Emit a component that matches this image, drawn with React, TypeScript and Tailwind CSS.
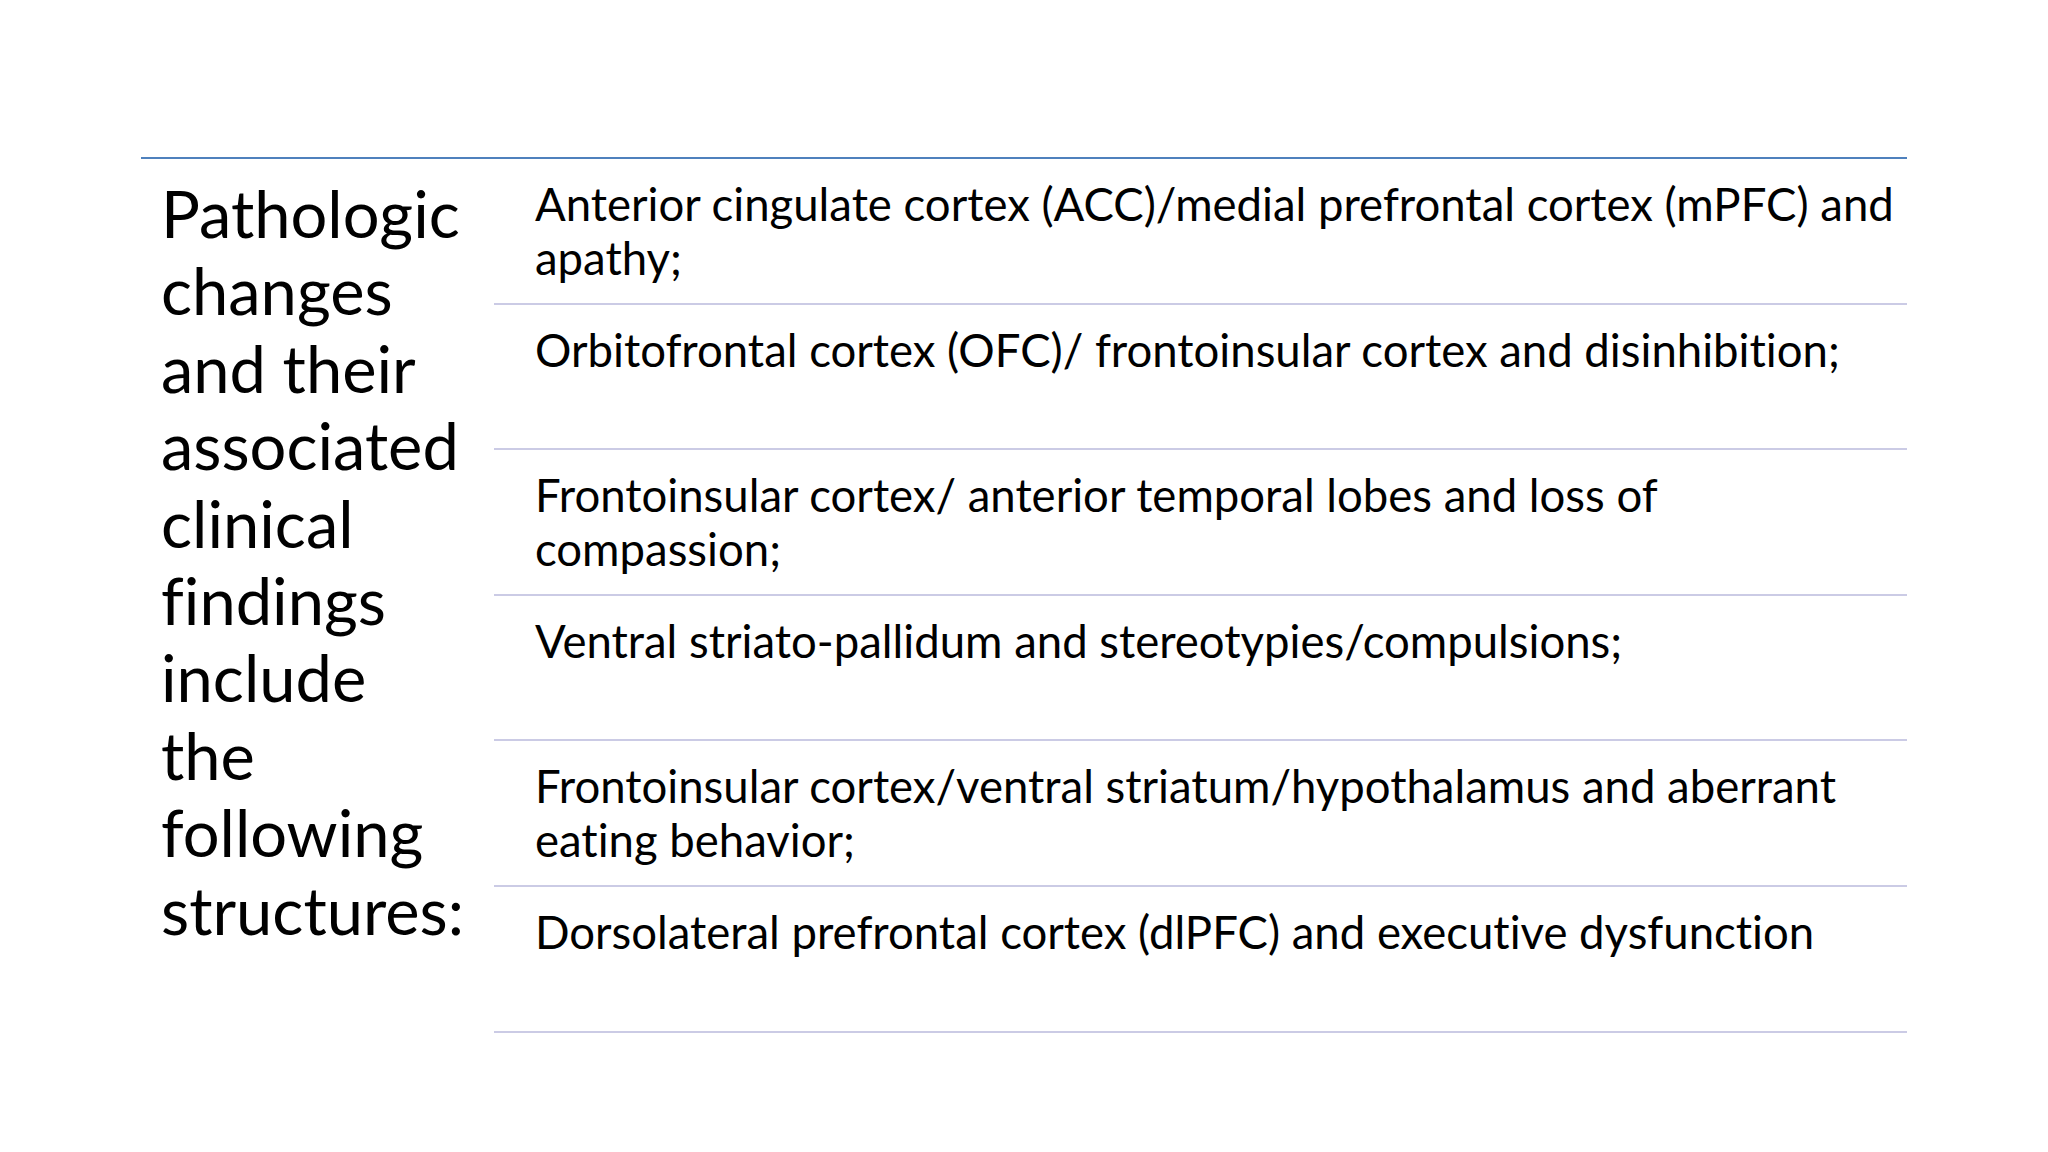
import React from "react";

const rows: string[] = [
  "Anterior cingulate cortex (ACC)/medial prefrontal cortex (mPFC) and apathy;",
  "Orbitofrontal cortex (OFC)/ frontoinsular cortex and disinhibition;",
  "Frontoinsular cortex/ anterior temporal lobes and loss of compassion;",
  "Ventral striato-pallidum and stereotypies/compulsions;",
  "Frontoinsular cortex/ventral striatum/hypothalamus and aberrant eating behavior;",
  "Dorsolateral prefrontal cortex (dlPFC) and executive dysfunction",
];

export default function App() {
  return (
    <div
      className="w-[2048px] h-[1152px] bg-white text-black overflow-hidden [font-variant-ligatures:none]"
      style={{ fontFamily: "Lato, 'Noto Sans', sans-serif" }}
    >
      <div className="pt-[157px] px-[141px]">
        <div className="border-t-2 border-[#4f81bd] grid grid-cols-[353px_1fr]">
          <div className="pl-[20px] pr-[26px] pt-[16px] text-[65px] leading-[77.4px]">
            Pathologic changes and their associated clinical findings include the following structures:
          </div>
          <div className="flex flex-col">
            {rows.map((r, i) => (
              <div
                key={i}
                className="h-[145.6px] border-b-2 border-[#cbcbe5] pl-[41px] pr-[4px] pt-[18px] text-[45.5px] leading-[53.8px]"
              >
                {r}
              </div>
            ))}
          </div>
        </div>
      </div>
    </div>
  );
}
